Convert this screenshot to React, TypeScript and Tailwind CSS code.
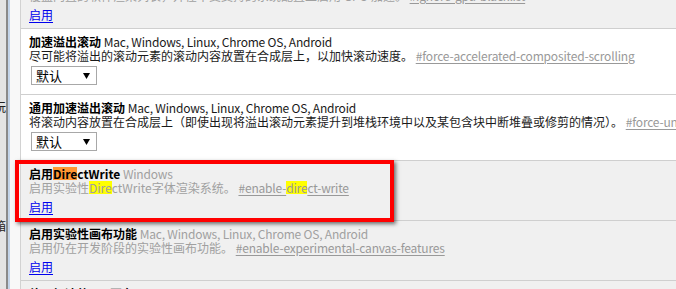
import React from "react";

const FONT = "font-['Noto_Sans_CJK_SC',sans-serif]";
const PLATFORMS = "Mac, Windows, Linux, Chrome OS, Android";

function Caret() {
  return (
    <svg width="7" height="6" viewBox="0 0 7 6" className="shrink-0">
      <polygon points="0,0 7,0 3.5,6" fill="#000" />
    </svg>
  );
}

function Select() {
  return (
    <div className="mt-[3px] ml-[2px] w-[66px] h-[19px] border border-[#a8a8a8] bg-white flex items-center justify-between pl-[4px] pr-[6px] text-black">
      <span className="text-[13px] leading-[17px]">默认</span>
      <Caret />
    </div>
  );
}

function EnableLink() {
  return (
    <div className="mt-[5px] h-[14px]">
      <span className="text-[#0000ee] underline underline-offset-[2px]">启用</span>
    </div>
  );
}

function Hash({ children }: { children: React.ReactNode }) {
  return (
    <span className="text-[#999999] underline underline-offset-[2px] tracking-[-0.18px]">{children}</span>
  );
}

function Plat({ color }: { color: string }) {
  return <span className={`${color} tracking-[-0.2px]`}>{PLATFORMS}</span>;
}

function Orange({ children }: { children: React.ReactNode }) {
  return <span className="inline-block bg-[#ff9632] h-[13px] leading-[13px]">{children}</span>;
}

function Yellow({ children }: { children: React.ReactNode }) {
  return <span className="inline-block bg-[#ffff00] h-[13px] leading-[13px]">{children}</span>;
}

export default function App() {
  return (
    <div
      className={`relative w-[676px] h-[289px] overflow-hidden flex bg-[#e8e8e8] ${FONT} text-[12px] leading-[14px]`}
    >
      {/* left clipped strip */}
      <div className="w-[6px] shrink-0 flex flex-col overflow-hidden bg-[#e4e4e4] text-[#222]">
        <div className="h-[100px] shrink-0" />
        <div className="h-[14px] flex justify-end shrink-0">
          <span className="shrink-0">玩</span>
        </div>
        <div className="h-[105px] shrink-0" />
        <div className="h-[14px] flex justify-end shrink-0">
          <span className="shrink-0">箱</span>
        </div>
      </div>
      <div className="w-[2px] shrink-0 bg-[#8a8a8a]" />
      <div className="w-[2px] shrink-0 bg-[#c3d4e9]" />
      <div className="w-[10px] shrink-0 bg-[#f8f8f8]" />

      {/* main content */}
      <div className="flex-1 min-w-0 border-l border-[#d2d2d2] flex flex-col whitespace-nowrap">
        <div className="mt-[-31px] flex flex-col">
          {/* row 0 (clipped) */}
          <div className="bg-[#f0f0f0] border-b border-[#cfcfcf] pl-[8px] pt-[6px] pb-[6px]">
            <div className="h-[14px]">
              <span className="font-bold text-black">覆盖软件渲染列表</span> <Plat color="text-[#a0a0a0]" />
            </div>
            <div className="h-[14px] text-[#a0a0a0]">
              覆盖内置的软件渲染列表，并在不受支持的系统配置上启用 GPU 加速。 <Hash>#ignore-gpu-blacklist</Hash>
            </div>
            <EnableLink />
          </div>

          {/* row 1 */}
          <div className="bg-white border-b border-[#cfcfcf] pl-[8px] pt-[6px] pb-[9px]">
            <div className="h-[14px]">
              <span className="font-bold text-black">加速溢出滚动</span> <Plat color="text-[#1a1a1a]" />
            </div>
            <div className="h-[14px] text-[#1a1a1a]">
              尽可能将溢出的滚动元素的滚动内容放置在合成层上，以加快滚动速度。{" "}
              <Hash>#force-accelerated-composited-scrolling</Hash>
            </div>
            <Select />
          </div>

          {/* row 2 */}
          <div className="bg-white border-b border-[#cfcfcf] pl-[8px] pt-[6px] pb-[9px]">
            <div className="h-[14px]">
              <span className="font-bold text-black">通用加速溢出滚动</span> <Plat color="text-[#1a1a1a]" />
            </div>
            <div className="h-[14px] text-[#1a1a1a]">
              将滚动内容放置在合成层上（即使出现将溢出滚动元素提升到堆栈环境中以及某包含块中断堆叠或修剪的情况）。{" "}
              <Hash>#force-universal-accelerated-overflow-scroll</Hash>
            </div>
            <Select />
          </div>

          {/* row 3 */}
          <div className="bg-[#f0f0f0] border-b border-[#cfcfcf] pl-[8px] pt-[6px] pb-[6px]">
            <div className="h-[14px]">
              <span className="font-bold text-black">
                启用<Orange>Dire</Orange>ctWrite
              </span>{" "}
              <span className="text-[#a0a0a0] tracking-[-0.2px]">Windows</span>
            </div>
            <div className="h-[14px] text-[#a0a0a0]">
              启用实验性<Yellow>Dire</Yellow>ctWrite字体渲染系统。{" "}
              <Hash>
                #enable-<Yellow>dire</Yellow>ct-write
              </Hash>
            </div>
            <EnableLink />
          </div>

          {/* row 4 */}
          <div className="bg-[#f0f0f0] border-b border-[#cfcfcf] pl-[8px] pt-[6px] pb-[6px]">
            <div className="h-[14px]">
              <span className="font-bold text-black">启用实验性画布功能</span> <Plat color="text-[#a0a0a0]" />
            </div>
            <div className="h-[14px] text-[#a0a0a0]">
              启用仍在开发阶段的实验性画布功能。 <Hash>#enable-experimental-canvas-features</Hash>
            </div>
            <EnableLink />
          </div>

          {/* row 5 (clipped) */}
          <div className="bg-[#f0f0f0] border-b border-[#cfcfcf] pl-[8px] pt-[6px] pb-[6px]">
            <div className="h-[14px]">
              <span className="font-bold text-black">停用加速的 2D 画布</span> <Plat color="text-[#a0a0a0]" />
            </div>
            <div className="h-[14px] text-[#a0a0a0]">停用加速的 2D 画布，改用软件渲染。</div>
            <EnableLink />
          </div>
        </div>
      </div>

      {/* red annotation box */}
      <div className="absolute left-[15px] top-[160px] w-[379px] h-[62px] border-[4px] border-[#ff0000] shadow-[2px_2px_4px_rgba(0,0,0,0.55)] pointer-events-none" />
    </div>
  );
}
